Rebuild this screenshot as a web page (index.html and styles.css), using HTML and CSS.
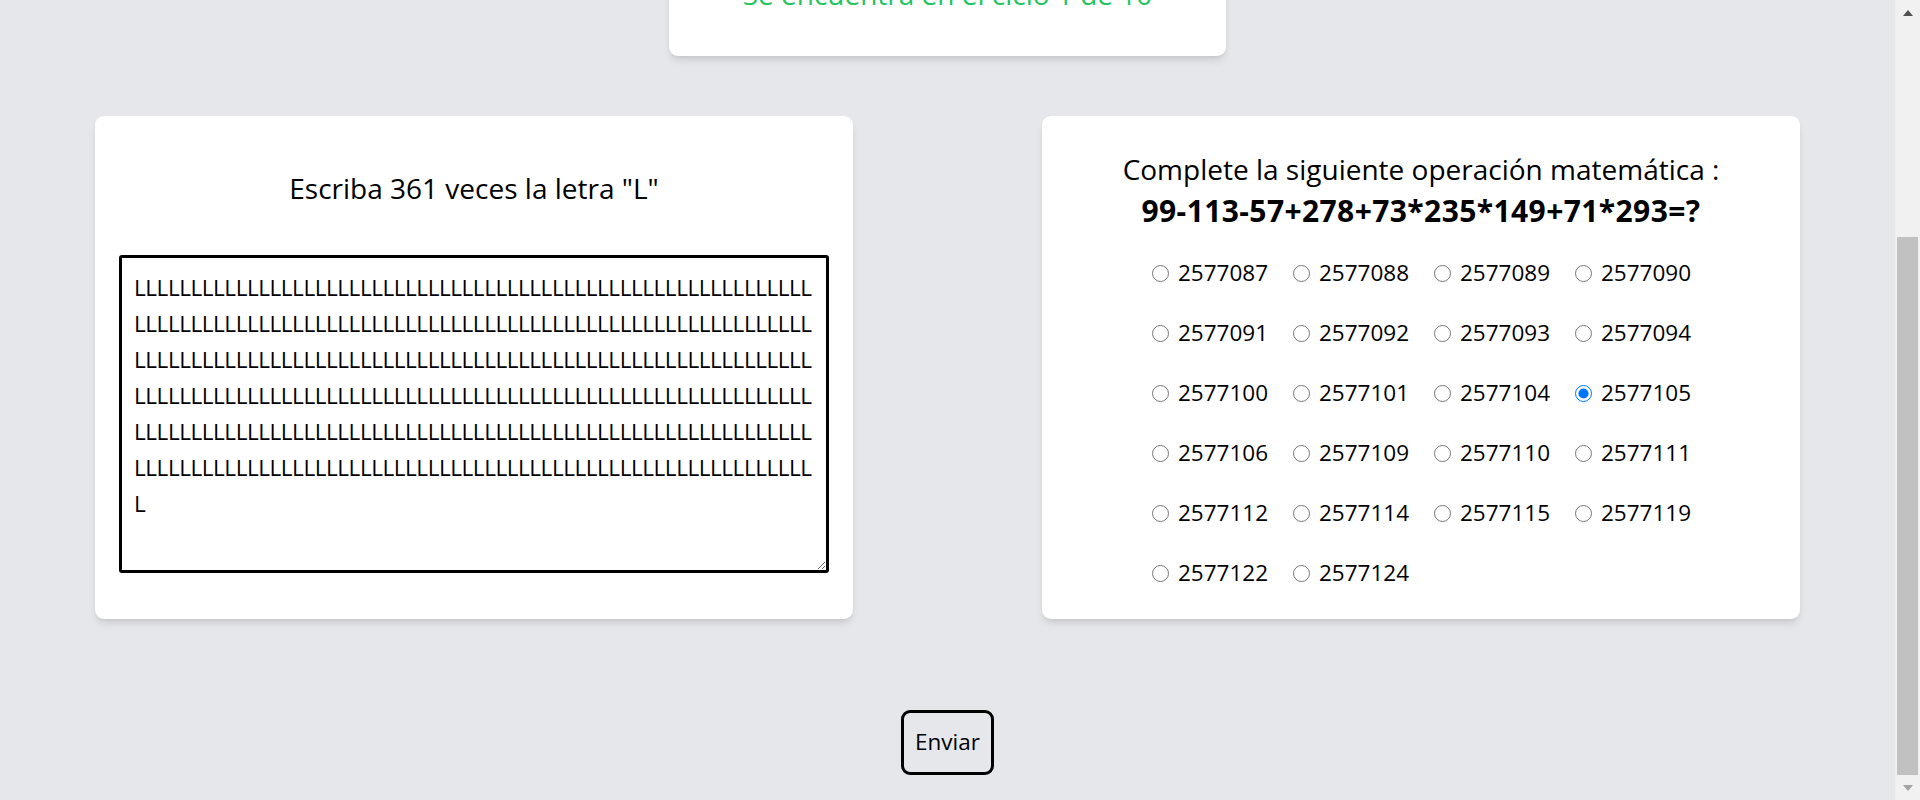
FILE: index.html
```html
<!DOCTYPE html>
<html lang="es">
<head>
<meta charset="utf-8">
<title>Ciclo 1 de 10</title>
<link rel="stylesheet" href="styles.css">
</head>
<body>
<div class="app">
  <main class="page">
    <div class="content">
      <section class="status-card">
        <p class="status">Se encuentra en el ciclo 1 de 10</p>
      </section>
      <div class="tasks">
        <section class="card card-letters">
          <h2 class="card-title">Escriba 361 veces la letra "L"</h2>
          <textarea class="letters" wrap="off">LLLLLLLLLLLLLLLLLLLLLLLLLLLLLLLLLLLLLLLLLLLLLLLLLLLLLLLLLLLL
LLLLLLLLLLLLLLLLLLLLLLLLLLLLLLLLLLLLLLLLLLLLLLLLLLLLLLLLLLLL
LLLLLLLLLLLLLLLLLLLLLLLLLLLLLLLLLLLLLLLLLLLLLLLLLLLLLLLLLLLL
LLLLLLLLLLLLLLLLLLLLLLLLLLLLLLLLLLLLLLLLLLLLLLLLLLLLLLLLLLLL
LLLLLLLLLLLLLLLLLLLLLLLLLLLLLLLLLLLLLLLLLLLLLLLLLLLLLLLLLLLL
LLLLLLLLLLLLLLLLLLLLLLLLLLLLLLLLLLLLLLLLLLLLLLLLLLLLLLLLLLLL
L</textarea>
        </section>
        <section class="card card-math">
          <h2 class="card-title">Complete la siguiente operación matemática :<br><strong class="equation">99-113-57+278+73*235*149+71*293=?</strong></h2>
          <div class="options">
            <label class="option"><input type="radio" name="resp">2577087</label>
            <label class="option"><input type="radio" name="resp">2577088</label>
            <label class="option"><input type="radio" name="resp">2577089</label>
            <label class="option"><input type="radio" name="resp">2577090</label>
            <label class="option"><input type="radio" name="resp">2577091</label>
            <label class="option"><input type="radio" name="resp">2577092</label>
            <label class="option"><input type="radio" name="resp">2577093</label>
            <label class="option"><input type="radio" name="resp">2577094</label>
            <label class="option"><input type="radio" name="resp">2577100</label>
            <label class="option"><input type="radio" name="resp">2577101</label>
            <label class="option"><input type="radio" name="resp">2577104</label>
            <label class="option"><input type="radio" name="resp" checked>2577105</label>
            <label class="option"><input type="radio" name="resp">2577106</label>
            <label class="option"><input type="radio" name="resp">2577109</label>
            <label class="option"><input type="radio" name="resp">2577110</label>
            <label class="option"><input type="radio" name="resp">2577111</label>
            <label class="option"><input type="radio" name="resp">2577112</label>
            <label class="option"><input type="radio" name="resp">2577114</label>
            <label class="option"><input type="radio" name="resp">2577115</label>
            <label class="option"><input type="radio" name="resp">2577119</label>
            <label class="option"><input type="radio" name="resp">2577122</label>
            <label class="option"><input type="radio" name="resp">2577124</label>
          </div>
        </section>
      </div>
      <div class="actions">
        <button class="submit" type="button">Enviar</button>
      </div>
    </div>
  </main>
  <div class="scrollbar" aria-hidden="true">
    <div class="sb-arrow sb-up"></div>
    <div class="sb-track"><div class="sb-thumb"></div></div>
    <div class="sb-arrow sb-down"></div>
  </div>
</div>
</body>
</html>
```
FILE: styles.css
```css
html, body {
  margin: 0;
  height: 100%;
}

body {
  background: #e5e7eb;
  color: #000;
  font-family: "Open Sans", "Noto Sans", sans-serif;
  overflow: hidden;
}

.app {
  display: flex;
  height: 800px;
}

.page {
  flex: 1;
  min-width: 0;
  display: flex;
  flex-direction: column;
  justify-content: flex-end;
  overflow: hidden;
}

.content {
  display: flex;
  flex-direction: column;
  align-items: center;
  padding-bottom: 25px;
}

.status-card {
  width: 557px;
  box-sizing: border-box;
  background: #fff;
  border-radius: 9px;
  box-shadow: 0 6px 9px -2px rgba(0, 0, 0, 0.1), 0 3px 6px -3px rgba(0, 0, 0, 0.1);
  padding: 40px 24px 41px;
  text-align: center;
}

.status {
  margin: 0;
  font-size: 28px;
  line-height: 42px;
  color: #22c55e;
}

.tasks {
  align-self: stretch;
  display: grid;
  grid-template-columns: 1fr 1fr;
  column-gap: 189px;
  padding: 0 95px;
  margin-top: 60px;
}

.card {
  background: #fff;
  border-radius: 9px;
  box-shadow: 0 6px 9px -2px rgba(0, 0, 0, 0.1), 0 3px 6px -3px rgba(0, 0, 0, 0.1);
  display: flex;
  flex-direction: column;
  justify-content: center;
  box-sizing: border-box;
  padding: 32px 24px 28px;
}

.card-title {
  margin: 0;
  font-size: 28px;
  line-height: 42px;
  font-weight: 400;
  text-align: center;
}

.equation {
  font-size: 30px;
  font-weight: 700;
  letter-spacing: 0.4px;
}

.letters {
  display: block;
  width: 100%;
  height: 318px;
  box-sizing: border-box;
  margin-top: 46px;
  border: 3px solid #000;
  border-radius: 3px;
  padding: 12px;
  font-family: "Open Sans", "Noto Sans", sans-serif;
  font-size: 22.5px;
  line-height: 36px;
  letter-spacing: -0.45px;
  color: #000;
  background: #fff;
  overflow: hidden;
  outline: none;
}

.options {
  display: grid;
  grid-template-columns: repeat(4, 115px);
  column-gap: 26px;
  row-gap: 24px;
  justify-content: center;
  margin-top: 23px;
}

.option {
  display: flex;
  align-items: center;
  font-size: 22.5px;
  line-height: 36px;
  white-space: nowrap;
}

.option input {
  width: 17px;
  height: 17px;
  margin: 0 9px 0 0;
  flex: none;
}

.actions {
  margin-top: 91px;
}

.submit {
  font-family: "Open Sans", "Noto Sans", sans-serif;
  font-size: 22.5px;
  line-height: 36px;
  padding: 11px 11px 12px;
  border: 3px solid #000;
  border-radius: 9px;
  background: transparent;
  color: #000;
}

.scrollbar {
  width: 25px;
  flex: none;
  background: #f1f1f1;
  display: flex;
  flex-direction: column;
}

.sb-arrow {
  height: 25px;
  flex: none;
  display: flex;
  align-items: center;
  justify-content: center;
}

.sb-up::before {
  content: "";
  border-left: 5.5px solid transparent;
  border-right: 5.5px solid transparent;
  border-bottom: 6px solid #505050;
}

.sb-down::before {
  content: "";
  border-left: 5.5px solid transparent;
  border-right: 5.5px solid transparent;
  border-top: 6px solid #a3a3a3;
}

.sb-track {
  flex: 1;
  display: flex;
  flex-direction: column;
  justify-content: flex-end;
  padding: 0 2px;
}

.sb-thumb {
  height: 538px;
  background: #c1c1c1;
}
```
